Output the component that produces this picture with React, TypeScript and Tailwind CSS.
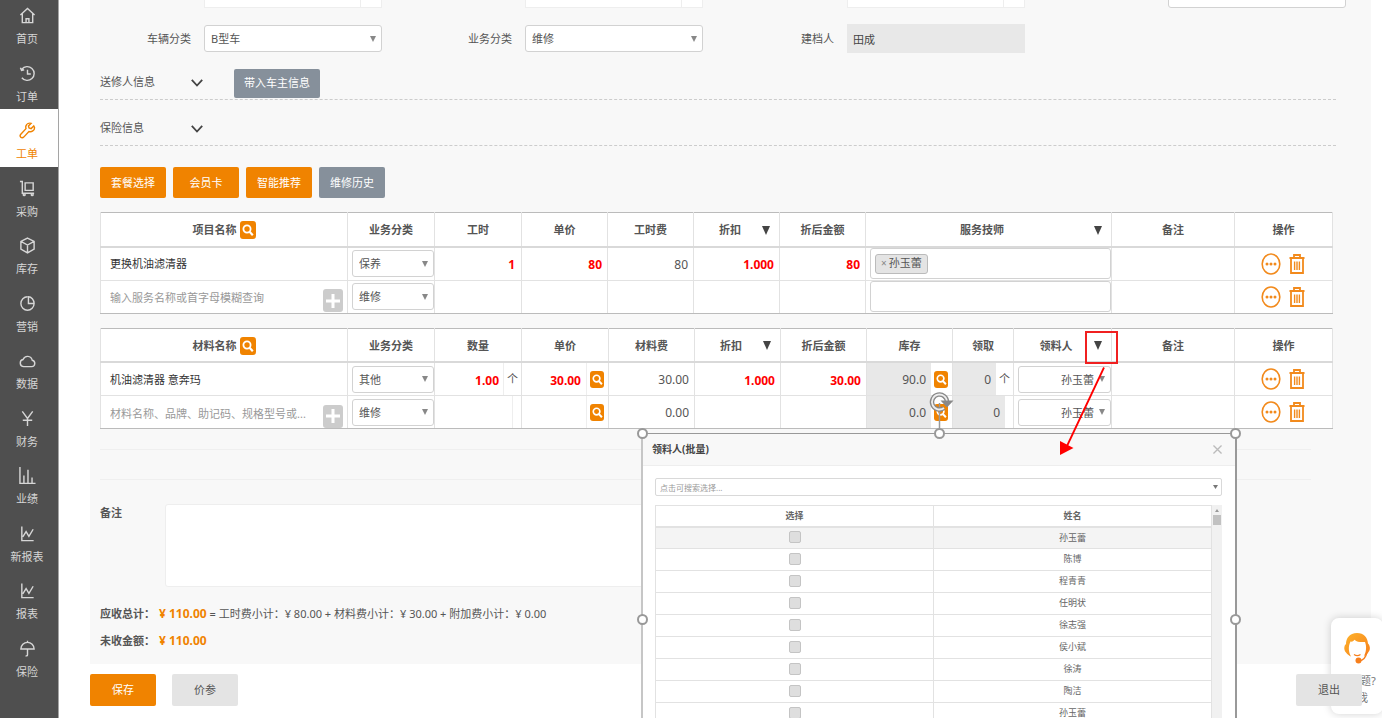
import type { ReactNode } from "react";
import clsx from "clsx";

type NavItem = {
  label: string;
  icon: ReactNode;
  active?: boolean;
};

const navItems: NavItem[] = [
  { label: "首页", icon: <path d="M1.5 8.5 9 1.5l7.5 7M3.500 7v9.500h11V7M7.500 16.500v-4h3v4" /> },
  { label: "订单", icon: <path d="M3 4.500A7.300 7.300 0 1 1 3 13.500M1.500 3l1.200 2.800 2.800-.8M9 5v4.500h3.500" /> },
  {
    label: "工单",
    active: true,
    icon: (
      <path d="M15.6 4.2 12.8 7l-2.2-.6L10 4.2l2.8-2.8C10.600.8 8 1.800 7.300 4.200c-.3 1.100-.1 2 .1 2.800L1.900 13c-.9 1-.8 2.300 0 3.100s2.200.8 3.100-.1l5.500-5.900c2.800.8 6.200-1 5.900-4.300z" />
    ),
  },
  {
    label: "采购",
    icon: (
      <>
        <path d="M1 1.500h2.500V14H16M6.500 3h8.500v8H6.500z" />
        <circle cx="5.500" cy="15.500" r="1" />
        <circle cx="14" cy="15.500" r="1" />
      </>
    ),
  },
  { label: "库存", icon: <path d="M9 1.200 16 4.700v8.200L9 16.800 2 12.900V4.700zM2 4.700l7 3.800 7-3.800M9 8.500v8.300" /> },
  { label: "营销", icon: <path d="M9 1.800a7 7.200 0 1 0 7 7.200c0-4-3-7.200-6-7.200V9h6" /> },
  { label: "数据", icon: <path d="M5 15.500h8.500a3.400 3.400 0 0 0 .6-6.700A5.200 5.600 0 0 0 4.300 8 3.800 3.800 0 0 0 5 15.500z" /> },
  { label: "财务", icon: <path d="M3.500 1.500 9 9l5.500-7.500M9 9v8M4 10.800h10" /> },
  { label: "业绩", icon: <path d="M1 0v17.500h16.500M5.200 9v8M9.500 3v14M13.800 11v6" /> },
  { label: "新报表", icon: <path d="M3 1.500v15h12.500M4 12.500l3.500-5.500 3 5L15 4.500" /> },
  { label: "报表", icon: <path d="M3 1.500v15h12.500M4 12.500l3.500-5.500 3 5L15 4.500" /> },
  { label: "保险", icon: <path d="M2 9.500a7 7 0 0 1 14 0zM9 .8v1.700M9 9.500v6c0 1.300-1.200 1.600-2 1" /> },
];

const people = ["孙玉蕾", "陈博", "程青青", "任明状", "徐志强", "侯小斌", "徐涛", "陶洁", "孙玉蕾", "王磊"];

function Sidebar() {
  return (
    <aside className="w-[59px] shrink-0 border-r border-[#a5a5a5] bg-[#4f4f4f]">
      <nav className="-mt-[6px] flex h-[690px] flex-col">
        {navItems.map((item) => (
          <a
            key={item.label}
            href="#"
            className={clsx(
              "flex flex-1 flex-col items-center gap-[7px] pr-[4px] pt-[13px] text-[11px] leading-[16px]",
              item.active ? "bg-white text-[#f08300]" : "text-[#d6d6d6]",
            )}
          >
            <svg viewBox="0 0 18 18" className="h-[17px] w-[17px]" fill="none" stroke="currentColor" strokeWidth="1.500">
              {item.icon}
            </svg>
            {item.label}
          </a>
        ))}
      </nav>
    </aside>
  );
}

function Triangle({ className }: { className?: string }) {
  return (
    <svg viewBox="0 0 8 8" preserveAspectRatio="none" className={className} fill="currentColor">
      <path d="M0 0h8L4 8z" />
    </svg>
  );
}

type SelectBoxProps = {
  id?: string;
  label?: string;
  value: string;
  className?: string;
  alignRight?: boolean;
};

function SelectBox({ id, label, value, className, alignRight }: SelectBoxProps) {
  return (
    <div className={clsx("relative", className)}>
      <select
        id={id}
        aria-label={label}
        className={clsx(
          "h-full w-full appearance-none rounded-[3px] border border-[#d2d2d2] bg-white pt-[2px] text-[11px] text-[#555]",
          alignRight ? "pr-[16px] [text-align-last:right]" : "pl-[6px] pr-4",
        )}
      >
        <option>{value}</option>
      </select>
      <Triangle className="pointer-events-none absolute right-[6px] top-1/2 h-[6px] w-[6px] -translate-y-1/2 text-[#888]" />
    </div>
  );
}

function Field({ id, label, children }: { id: string; label: string; children: ReactNode }) {
  return (
    <div className="flex h-[29px] items-center justify-end gap-[13px]">
      <label htmlFor={id} className="pt-[2px] text-[11px] text-[#555]">
        {label}
      </label>
      <div className="flex h-full w-[178px] items-center">{children}</div>
    </div>
  );
}

function AddonInput({ id }: { id: string }) {
  return (
    <div className="flex h-full w-full border border-[#eee] bg-white">
      <input id={id} className="min-w-0 flex-1 border-r border-[#eee] px-2 text-[11px]" />
      <span className="w-[20px]" />
    </div>
  );
}

function SearchButton({ small }: { small?: boolean }) {
  return (
    <button
      type="button"
      aria-label="查询"
      className={clsx(
        "flex shrink-0 items-center justify-center rounded-[3px] bg-[#f08300] text-white",
        small ? "h-[17px] w-[14px]" : "h-[18px] w-4",
      )}
    >
      <svg viewBox="0 0 12 12" className={small ? "h-[11px] w-[11px]" : "h-3 w-3"} fill="none" stroke="currentColor" strokeWidth="1.800">
        <circle cx="5" cy="5" r="3.600" />
        <path d="m7.600 7.800 3.200 3.400" strokeWidth="2.200" />
      </svg>
    </button>
  );
}

function RowActions() {
  return (
    <div className="flex items-center justify-center gap-[8px] pr-[2px] text-[#f28a1c]">
      <button type="button" aria-label="更多">
        <svg viewBox="0 0 20 22" className="h-[22px] w-[20px]" fill="none" stroke="currentColor" strokeWidth="1.600">
          <ellipse cx="10" cy="11" rx="8.800" ry="10" />
          <g fill="currentColor" stroke="none">
            <circle cx="6" cy="11" r="1.500" />
            <circle cx="10" cy="11" r="1.500" />
            <circle cx="14" cy="11" r="1.500" />
          </g>
        </svg>
      </button>
      <button type="button" aria-label="删除">
        <svg viewBox="0 0 16 22" className="h-[22px] w-[16px]" fill="none" stroke="currentColor" strokeWidth="1.800">
          <path d="M.5 5h15M5 4.500V2h6v2.500M2 5.500V20h12V5.500" />
          <path d="M5.600 8.500v8.500M8 8.500v8.500M10.400 8.500v8.500" strokeWidth="1.400" />
        </svg>
      </button>
    </div>
  );
}

function AddButton() {
  return (
    <button type="button" aria-label="新增" className="mt-[8px] flex h-[23px] w-[20px] shrink-0 items-center justify-center rounded-[3px] bg-[#ccc]">
      <svg viewBox="0 0 14 16" className="h-4 w-[14px]" stroke="#fff" strokeWidth="3">
        <path d="M7 1v14M0 8h14" />
      </svg>
    </button>
  );
}

function NumberInput({ label, value, className }: { label: string; value?: string; className?: string }) {
  return (
    <input
      aria-label={label}
      defaultValue={value}
      className={clsx("h-8 w-full min-w-0 bg-transparent pt-[2px] text-right text-[12px] font-bold text-[#f00]", className)}
    />
  );
}

function Th({ children, menu }: { children: ReactNode; menu?: boolean }) {
  return (
    <th className="h-[34px] border-x border-b-2 border-[#e2e2e2] border-b-[#d9d9d9] p-0 pt-[2px] text-[11px] font-bold text-[#555]">
      {menu ? (
        <div className="flex items-center pr-[9px]">
          <span className="flex-1 pl-1">{children}</span>
          <button type="button" aria-label="批量设置">
            <Triangle className="h-[9px] w-[8px] text-[#444]" />
          </button>
        </div>
      ) : (
        <div className="flex items-center justify-center gap-[3px]">{children}</div>
      )}
    </th>
  );
}

function Td({ children, className }: { children?: ReactNode; className?: string }) {
  return <td className={clsx("h-[33px] border border-[#e2e2e2] p-0", className)}>{children}</td>;
}

const tableClass =
  "w-full table-fixed border-collapse border-y border-[#bbb] bg-white text-[11px] text-[#555] [&_tbody_tr:last-child_td]:border-b-[#bbb]";

function ServiceTable() {
  const widths = [247, 87, 87, 86, 86, 86, 86, 246, 123, 98];
  return (
    <table className={tableClass}>
      <colgroup>
        {widths.map((w, i) => (
          <col key={i} style={{ width: w }} />
        ))}
      </colgroup>
      <thead>
        <tr>
          <Th>
            项目名称
            <SearchButton />
          </Th>
          <Th>业务分类</Th>
          <Th>工时</Th>
          <Th>单价</Th>
          <Th>工时费</Th>
          <Th menu>折扣</Th>
          <Th>折后金额</Th>
          <Th menu>服务技师</Th>
          <Th>备注</Th>
          <Th>操作</Th>
        </tr>
      </thead>
      <tbody>
        <tr>
          <Td className="pl-[9px] pt-[2px] text-[#333]">更换机油滤清器</Td>
          <Td className="pl-[4px]">
            <SelectBox label="业务分类" value="保养" className="h-[27px]" />
          </Td>
          <Td className="px-[6px]">
            <NumberInput label="工时" value="1" />
          </Td>
          <Td className="px-[5px]">
            <NumberInput label="单价" value="80" />
          </Td>
          <Td className="px-[5px] pt-[2px] text-right text-[12px]">80</Td>
          <Td className="px-[5px]">
            <NumberInput label="折扣" value="1.000" />
          </Td>
          <Td className="px-[5px]">
            <NumberInput label="折后金额" value="80" />
          </Td>
          <Td className="pl-[4px]">
            <div className="flex h-[31px] items-center rounded-[3px] border border-[#d2d2d2] px-1">
              <span className="flex h-[20px] items-center gap-[2px] rounded-[3px] border border-[#bbb] bg-[#e4e4e4] px-[5px]">
                <button type="button" aria-label="移除" className="text-[10px] text-[#888]">
                  ×
                </button>
                孙玉蕾
              </span>
            </div>
          </Td>
          <Td />
          <Td>
            <RowActions />
          </Td>
        </tr>
        <tr>
          <Td>
            <div className="flex items-center pl-[9px] pr-[4px]">
              <input
                aria-label="项目名称"
                placeholder="输入服务名称或首字母模糊查询"
                className="min-w-0 flex-1 pt-[4px] text-[11px] placeholder:text-[#999]"
              />
              <AddButton />
            </div>
          </Td>
          <Td className="pl-[4px]">
            <SelectBox label="业务分类" value="维修" className="h-[27px]" />
          </Td>
          <Td />
          <Td />
          <Td />
          <Td />
          <Td />
          <Td className="pl-[4px]">
            <input aria-label="服务技师" className="block h-[31px] w-full rounded-[3px] border border-[#d2d2d2] px-2" />
          </Td>
          <Td />
          <Td>
            <RowActions />
          </Td>
        </tr>
      </tbody>
    </table>
  );
}

type Material = {
  name: ReactNode;
  category: string;
  quantity?: string;
  price?: string;
  cost: string;
  discount?: string;
  amount?: string;
  stock: string;
  unit?: string;
};

const materials: Material[] = [
  {
    name: <div className="pl-[9px] pt-[3px] text-[#333]">机油滤清器 意奔玛</div>,
    category: "其他",
    quantity: "1.00",
    price: "30.00",
    cost: "30.00",
    discount: "1.000",
    amount: "30.00",
    stock: "90.0",
    unit: "个",
  },
  {
    name: (
      <div className="flex items-center pl-[9px] pr-[4px]">
        <input
          aria-label="材料名称"
          placeholder="材料名称、品牌、助记码、规格型号或..."
          className="min-w-0 flex-1 pt-[4px] text-[11px] placeholder:text-[#999]"
        />
        <AddButton />
      </div>
    ),
    category: "维修",
    cost: "0.00",
    stock: "0.0",
  },
];

function MaterialTable() {
  const widths = [247, 87, 87, 87, 86, 86, 86, 86, 61, 98, 123, 98];
  return (
    <table className={tableClass}>
      <colgroup>
        {widths.map((w, i) => (
          <col key={i} style={{ width: w }} />
        ))}
      </colgroup>
      <thead>
        <tr>
          <Th>
            材料名称
            <SearchButton />
          </Th>
          <Th>业务分类</Th>
          <Th>数量</Th>
          <Th>单价</Th>
          <Th>材料费</Th>
          <Th menu>折扣</Th>
          <Th>折后金额</Th>
          <Th>库存</Th>
          <Th>领取</Th>
          <Th menu>领料人</Th>
          <Th>备注</Th>
          <Th>操作</Th>
        </tr>
      </thead>
      <tbody>
        {materials.map((m) => (
          <tr key={m.category}>
            <Td>{m.name}</Td>
            <Td className="pl-[4px]">
              <SelectBox label="业务分类" value={m.category} className="h-[27px]" />
            </Td>
            <Td>
              <div className="flex items-center">
                <NumberInput label="数量" value={m.quantity} className="border-r border-[#eee] pr-[4px]" />
                <span className={clsx("shrink-0 text-center", m.unit ? "w-[17px]" : "w-[8px]")}>{m.unit}</span>
              </div>
            </Td>
            <Td>
              <div className="flex items-center gap-[3px] pr-[4px]">
                <NumberInput label="单价" value={m.price} className="border-r border-[#eee] pr-[5px]" />
                <SearchButton small />
              </div>
            </Td>
            <Td className="px-[5px] pt-[2px] text-right text-[12px]">{m.cost}</Td>
            <Td className="px-[5px]">
              <NumberInput label="折扣" value={m.discount} />
            </Td>
            <Td className="px-[5px]">
              <NumberInput label="折后金额" value={m.amount} />
            </Td>
            <Td>
              <div className="flex items-center gap-[3px] pr-[4px]">
                <span className="h-8 flex-1 bg-[#e8e8e8] pr-[5px] pt-[2px] text-right text-[12px] leading-[30px]">{m.stock}</span>
                <SearchButton small />
              </div>
            </Td>
            <Td>
              <div className="flex items-center">
                <span className="h-8 flex-1 bg-[#e8e8e8] pr-[5px] pt-[2px] text-right text-[12px] leading-[30px]">0</span>
                <span className={clsx("shrink-0 text-center", m.unit ? "w-[17px]" : "w-[8px]")}>{m.unit}</span>
              </div>
            </Td>
            <Td className="pl-[4px]">
              <SelectBox label="领料人" value="孙玉蕾" className="h-[27px]" alignRight />
            </Td>
            <Td />
            <Td>
              <RowActions />
            </Td>
          </tr>
        ))}
      </tbody>
    </table>
  );
}

function Chevron() {
  return (
    <svg viewBox="0 0 12 8" className="h-2 w-3" fill="none" stroke="#444" strokeWidth="1.800">
      <path d="m.8.8 5.200 5.700L11.200.8" />
    </svg>
  );
}

function Handle({ className }: { className: string }) {
  return <span className={clsx("absolute h-[11px] w-[11px] rounded-full border-2 border-[#999] bg-white", className)} />;
}

function PickerDialog() {
  return (
    <section
      role="dialog"
      aria-label="领料人(批量)"
      className="absolute left-[641px] top-[433px] h-[372px] w-[596px] border-x-2 border-t border-[#999] border-l-[#c6c6c6] bg-white"
    >
      <header className="flex h-8 items-center justify-between border-b border-[#eee] bg-[#f8f8f8] pl-[9px] pr-[13px]">
        <h2 className="text-[10px] font-bold text-[#444]">领料人(批量)</h2>
        <button type="button" aria-label="关闭">
          <svg viewBox="0 0 10 10" className="h-[9px] w-[9px]" stroke="#bbb" strokeWidth="1.500">
            <path d="m.5.5 9 9M9.500.5l-9 9" />
          </svg>
        </button>
      </header>
      <div className="pl-[12px] pr-[13px] pt-3">
        <div className="relative">
          <input
            aria-label="搜索领料人"
            placeholder="点击可搜索选择..."
            className="block h-[18px] w-full rounded-[2px] border border-[#d9d9d9] px-1 text-[8px] placeholder:text-[#999]"
          />
          <Triangle className="absolute right-1 top-[7px] h-[4px] w-[5px] text-[#777]" />
        </div>
        <div className="mt-[9px] flex h-[230px] overflow-hidden">
          <table className="flex-1 table-fixed border-collapse self-start text-[9px] text-[#666]">
            <thead>
              <tr>
                <th className="h-[21px] w-1/2 border border-b-2 border-[#e2e2e2] p-0 font-bold">选择</th>
                <th className="h-[21px] w-1/2 border border-b-2 border-[#e2e2e2] p-0 font-bold">姓名</th>
              </tr>
            </thead>
            <tbody>
              {people.map((name, i) => (
                <tr key={i} className={i === 0 ? "bg-[#f4f4f4]" : "bg-white"}>
                  <td className="h-[22px] border border-[#e2e2e2] p-0 pb-[2px]">
                    <input
                      type="checkbox"
                      aria-label={name}
                      className="mx-auto block h-3 w-3 appearance-none rounded-[2px] border border-[#c4c4c4] bg-[#dedede]"
                    />
                  </td>
                  <td className="h-[22px] border border-[#e2e2e2] p-0 pb-[1px] text-center">{name}</td>
                </tr>
              ))}
            </tbody>
          </table>
          <div className="flex w-[10px] flex-col items-center gap-[3px] bg-[#f1f1f1] pt-1">
            <Triangle className="h-[3px] w-1 rotate-180 text-[#999]" />
            <span className="h-[10px] w-[8px] bg-[#c1c1c1]" />
          </div>
        </div>
      </div>

      {/* rotation grip */}
      <svg viewBox="0 0 26 42" className="absolute -top-[44px] left-[286px] h-[42px] w-[26px]" fill="none">
        <path d="M10.500 13v29" stroke="#999" strokeWidth="1.500" />
        <path d="M18 12a7.500 7.500 0 1 0-3 6" stroke="#888" strokeWidth="4.500" />
        <path d="M18 12a7.500 7.500 0 1 0-3 6" stroke="#eee" strokeWidth="1.800" />
        <path d="M11.500 10.500h13L18 17.500z" fill="#888" />
      </svg>
      <Handle className="-left-[6px] -top-[6px]" />
      <Handle className="left-[291px] -top-[6px]" />
      <Handle className="-right-[6px] -top-[6px]" />
      <Handle className="-left-[6px] top-[180px]" />
      <Handle className="-right-[6px] top-[180px]" />
    </section>
  );
}

function Annotation() {
  return (
    <>
      <div className="absolute left-[1085px] top-[331px] h-[33px] w-[33px] border-2 border-[#f02020]" />
      <svg viewBox="0 0 48 90" className="absolute left-[1059px] top-[366px] h-[90px] w-[48px]">
        <path d="M45 1.500 8 80" stroke="#f00" strokeWidth="1.800" />
        <path d="M1 75v14l13.500-7z" fill="#f00" />
      </svg>
    </>
  );
}

function SupportCard() {
  return (
    <a
      href="#"
      className="absolute -right-[1px] top-[618px] flex h-[96px] w-[52px] flex-col items-center rounded-[8px] bg-white pt-[14px] text-[11px] leading-[17px] text-[#777] shadow-[0_0_8px_rgba(0,0,0,0.18)]"
    >
      <svg viewBox="0 0 28 32" className="mb-[8px] h-8 w-7">
        <defs>
          <linearGradient id="hair" x1="0" y1="0" x2="1" y2="1">
            <stop offset="0" stopColor="#fdb32b" />
            <stop offset="1" stopColor="#f77f1c" />
          </linearGradient>
        </defs>
        <path
          d="M14 1C6.500 1 3 6.500 3 12c-2 1.500-2.500 6 0 8.500 1.500 2 3.500 3.500 5 4C5.500 20 5 14.500 7.500 9.500c2 .5 3-.5 4-1.800 2.500 2.500 6.500 2.500 10.500 2.300 2 5 1 10.500-1 14 2-.8 3.500-2 4.500-4 2.300-2.500 1.500-6.500-.5-8.500C24.500 5.500 21 1 14 1z"
          fill="url(#hair)"
        />
        <path d="M24 20c-1 5-4 8.500-8 9M11 22.500c2 1.300 4.500 1.300 6.500 0" fill="none" stroke="#f77f1c" strokeWidth="1.300" />
        <circle cx="15.500" cy="28.500" r="3" fill="#f77f1c" />
      </svg>
      <span>有问题?</span>
      <span>找我</span>
    </a>
  );
}

export default function App() {
  const actionClass = "h-[31px] w-[66px] rounded-[2px] pt-[2px] text-[11px] text-white";

  return (
    <div className="relative flex h-screen overflow-hidden bg-white font-['Noto_Sans','Noto_Sans_CJK_SC',sans-serif] text-[#555]">
      <Sidebar />
      <SupportCard />

      <main className="min-w-0 flex-1 pl-[31px]">
        <div className="-mt-[21px] mr-[11px] bg-[#f8f8f8] pb-[13px]">
          <form className="grid grid-cols-[292fr_321fr_322fr_321fr] gap-y-4 pr-[25px]">
            <Field id="mileage" label="上次里程">
              <AddonInput id="mileage" />
            </Field>
            <Field id="next" label="下次保养">
              <AddonInput id="next" />
            </Field>
            <Field id="nextDate" label="下次保养日期">
              <AddonInput id="nextDate" />
            </Field>
            <Field id="store" label="门店">
              <SelectBox id="store" value="总店" className="h-full w-full" />
            </Field>
            <Field id="carType" label="车辆分类">
              <SelectBox id="carType" value="B型车" className="h-[27px] w-full" />
            </Field>
            <Field id="bizType" label="业务分类">
              <SelectBox id="bizType" value="维修" className="h-[27px] w-full" />
            </Field>
            <Field id="creator" label="建档人">
              <input id="creator" readOnly value="田成" className="h-full w-full bg-[#e8e8e8] px-[6px] text-[11px] text-[#444]" />
            </Field>
          </form>

          <div className="pl-[10px] pr-[35px]">
            <div className="mt-4 flex h-[31px] items-center border-b border-dashed border-[#ccc] pb-[3px] text-[11px]">
              <span className="w-[91px]">送修人信息</span>
              <button type="button" aria-label="展开送修人信息">
                <Chevron />
              </button>
              <button type="button" className="ml-[31px] mt-[2px] h-[29px] w-[86px] shrink-0 rounded-[2px] bg-[#86909b] text-[11px] text-white">
                带入车主信息
              </button>
            </div>
            <div className="mt-3 flex h-[34px] items-center border-b border-dashed border-[#ccc] text-[11px]">
              <span className="w-[91px]">保险信息</span>
              <button type="button" aria-label="展开保险信息">
                <Chevron />
              </button>
            </div>

            <div className="mt-[21px] flex gap-[7px]">
              <button type="button" className={clsx(actionClass, "bg-[#f08300]")}>
                套餐选择
              </button>
              <button type="button" className={clsx(actionClass, "bg-[#f08300]")}>
                会员卡
              </button>
              <button type="button" className={clsx(actionClass, "bg-[#f08300]")}>
                智能推荐
              </button>
              <button type="button" className={clsx(actionClass, "bg-[#86909b]")}>
                维修历史
              </button>
            </div>

            <div className="mt-[14px] flex flex-col gap-[14px] pr-[3px]">
              <ServiceTable />
              <MaterialTable />
            </div>

            <div className="mr-[25px] mt-[20px] h-[31px] border-y border-[#efefef]" />

            <div className="mt-6 flex">
              <label htmlFor="remark" className="w-[65px] text-[11px] font-bold leading-[18px]">
                备注
              </label>
              <textarea id="remark" className="mr-[120px] h-[83px] flex-1 resize-none rounded-[3px] border border-[#eee] bg-white p-2 text-[11px]" />
            </div>

            <p className="mt-[17px] text-[11px] leading-[20px]">
              <strong>应收总计：</strong>
              <strong className="ml-1 text-[12px] text-[#f08300]">¥ 110.00</strong> = 工时费小计：¥ 80.00 + 材料费小计：¥ 30.00 + 附加费小计：¥ 0.00
            </p>
            <p className="mt-[7px] text-[11px] leading-[20px]">
              <strong>未收金额：</strong>
              <strong className="ml-1 text-[12px] text-[#f08300]">¥ 110.00</strong>
            </p>
          </div>
        </div>

        <footer className="relative flex gap-4 pr-[20px] pt-[10px]">
          <button type="button" className="h-8 w-[66px] rounded-[2px] bg-[#f08300] text-[11px] text-white">
            保存
          </button>
          <button type="button" className="h-8 w-[66px] rounded-[2px] bg-[#e4e4e4] text-[11px]">
            价参
          </button>
          <button type="button" className="ml-auto h-8 w-[66px] rounded-[2px] bg-[#e4e4e4] text-[11px]">
            退出
          </button>
        </footer>
      </main>

      <PickerDialog />
      <Annotation />
    </div>
  );
}
